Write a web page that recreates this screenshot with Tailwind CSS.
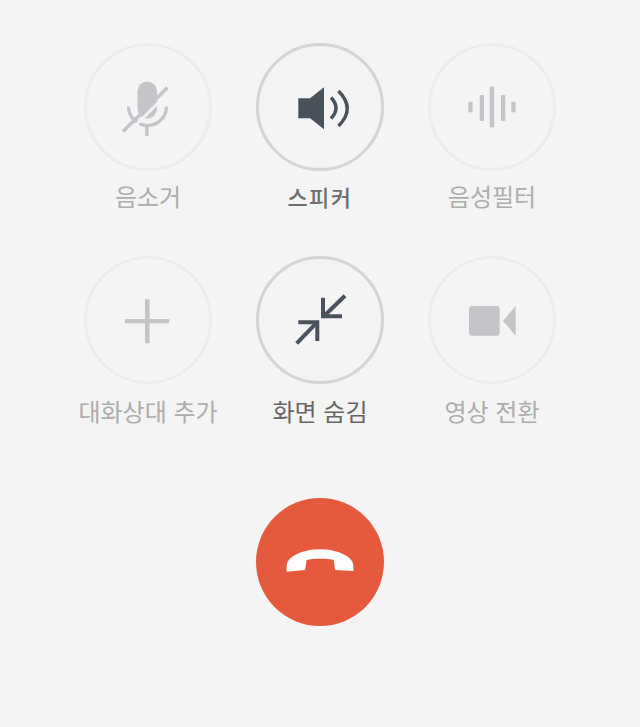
<!DOCTYPE html>
<html lang="ko">
<head>
  <meta charset="UTF-8">
  <meta name="viewport" content="width=device-width, initial-scale=1.0">
  <title>통화</title>
  <script src="https://cdn.jsdelivr.net/npm/@tailwindcss/browser@4"></script>
</head>
<body class="bg-[#f4f4f4] h-[727px] overflow-hidden font-['Noto_Sans_CJK_KR','Noto_Sans',sans-serif]">
  <div class="flex flex-col items-center pt-[43px]">
    <div class="grid grid-cols-[172px_172px_172px] gap-y-[45px] text-center text-[24px] leading-[30px]">

      <!-- mute -->
      <div class="flex flex-col items-center">
        <button class="w-32 h-32 rounded-full border-[3px] border-[#ececec]">
          <svg class="-m-[3px]" width="128" height="128" viewBox="0 0 128 128" fill="none">
            <rect x="53.5" y="38.5" width="19.5" height="37" rx="9.75" fill="#c4c5c8"/>
            <path d="M44.5 63.5a19 19 0 0 0 38 0" stroke="#c4c5c8" stroke-width="3.2"/>
            <path d="M62.9 83v10" stroke="#c4c5c8" stroke-width="3.4"/>
            <path d="M42 92 86 48" stroke="#f4f4f4" stroke-width="3"/>
            <path d="M39 88.5 83.5 44.5" stroke="#c4c5c8" stroke-width="3.4"/>
          </svg>
        </button>
        <span class="mt-[10px] text-[#adadad]">음소거</span>
      </div>

      <!-- speaker -->
      <div class="flex flex-col items-center">
        <button class="w-32 h-32 rounded-full border-[3px] border-[#d4d4d4]">
          <svg class="-m-[3px]" width="128" height="128" viewBox="0 0 128 128" fill="none">
            <path d="M42.3 55.3H54L68 44.3V86.3L54 75.3H42.3Z" fill="#4a525c"/>
            <path d="M75 54.5q10 10.5 0 21" stroke="#4a525c" stroke-width="3.4"/>
            <path d="M82.5 48q17.5 17.5 0 35" stroke="#4a525c" stroke-width="3.4"/>
          </svg>
        </button>
        <span class="mt-[10px] font-medium tracking-[1.5px] text-[22px] text-[#6e6e6e]">스피커</span>
      </div>

      <!-- voice filter -->
      <div class="flex flex-col items-center">
        <button class="w-32 h-32 rounded-full border-[3px] border-[#ececec]">
          <svg class="-m-[3px]" width="128" height="128" viewBox="0 0 128 128" fill="#c4c5c8">
            <rect x="40.3" y="58.7" width="4.3" height="10.6"/>
            <rect x="51.7" y="52" width="4.3" height="26"/>
            <rect x="61.7" y="43.7" width="4.5" height="40.6"/>
            <rect x="73" y="52" width="4.3" height="26"/>
            <rect x="83.3" y="58.7" width="4.3" height="10.6"/>
          </svg>
        </button>
        <span class="mt-[10px] text-[#adadad]">음성필터</span>
      </div>

      <!-- add person -->
      <div class="flex flex-col items-center">
        <button class="w-32 h-32 rounded-full border-[3px] border-[#ececec]">
          <svg class="-m-[3px]" width="128" height="128" viewBox="0 0 128 128" fill="#c4c5c8">
            <rect x="41" y="63" width="44.3" height="4.3"/>
            <rect x="61" y="43.3" width="4.6" height="44"/>
          </svg>
        </button>
        <span class="mt-3 text-[#adadad] whitespace-nowrap">대화상대 추가</span>
      </div>

      <!-- hide screen -->
      <div class="flex flex-col items-center">
        <button class="w-32 h-32 rounded-full border-[3px] border-[#d4d4d4]">
          <svg class="-m-[3px]" width="128" height="128" viewBox="0 0 128 128" fill="none" stroke="#4a525c" stroke-width="4">
            <path d="M67 41.7V60.3H86"/>
            <path d="M89 39.7 67 61"/>
            <path d="M42.3 66.3H61.3V85"/>
            <path d="M40.7 87.3 61 66.3"/>
          </svg>
        </button>
        <span class="mt-3 text-[#666666] whitespace-nowrap">화면 숨김</span>
      </div>

      <!-- switch to video -->
      <div class="flex flex-col items-center">
        <button class="w-32 h-32 rounded-full border-[3px] border-[#ececec]">
          <svg class="-m-[3px]" width="128" height="128" viewBox="0 0 128 128" fill="#c4c5c8">
            <rect x="41" y="50" width="30.7" height="29.7" rx="3"/>
            <path d="M87.7 50 75 65 87.7 79.7Z"/>
          </svg>
        </button>
        <span class="mt-3 text-[#adadad] whitespace-nowrap">영상 전환</span>
      </div>
    </div>

    <!-- hang up -->
    <button class="mt-[72px] w-32 h-32 rounded-full bg-[#e55a3c]">
      <svg width="128" height="128" viewBox="0 0 128 128" fill="#fff">
        <path d="M30.7 73.7C30.4 70 30.6 66.5 31.5 64 36 56 50 51.3 64 51.3S92 56 96.5 64C97.4 66.5 97.6 70 97.3 73L79.5 72C78.6 70 78.3 66 77.8 62 72 60.3 56 60.3 50.5 62 50 66 49.6 70 48.8 72Z"/>
      </svg>
    </button>
  </div>
</body>
</html>
